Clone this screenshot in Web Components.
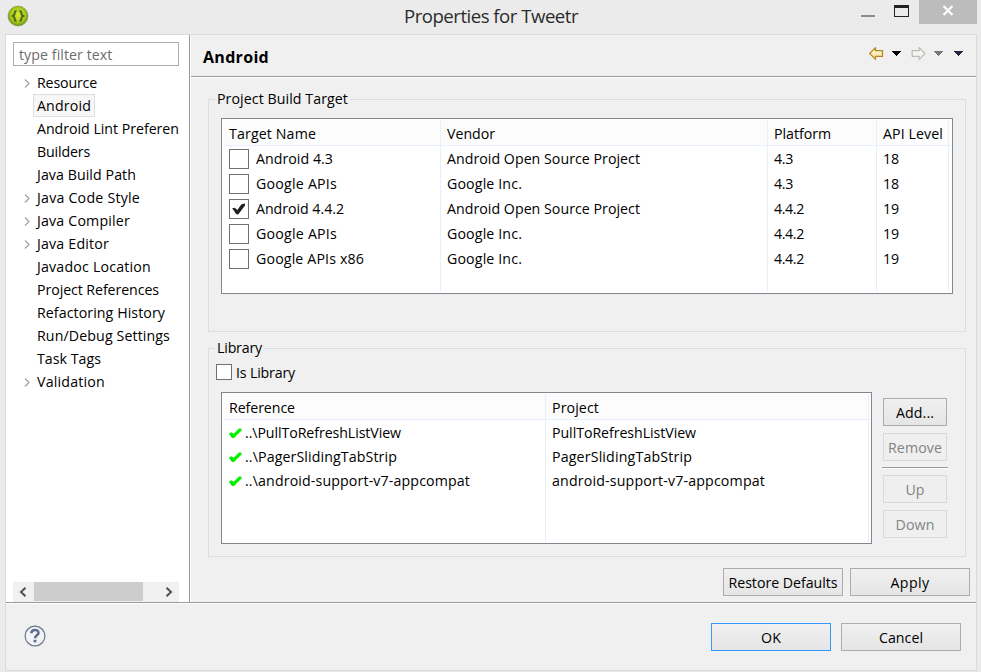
<!DOCTYPE html>
<html lang="en">
<head>
<meta charset="utf-8">
<title>Properties for Tweetr</title>
<style>
html,body{margin:0;height:100%;overflow:hidden;background:#ebebeb}
body{font:14.2px/22px "Open Sans","Noto Sans",sans-serif;color:#000}
</style>
</head>
<body>
<properties-dialog></properties-dialog>
<script>
function define(name, css, html, setup) {
  const template = document.createElement('template');
  template.innerHTML = '<style>*{box-sizing:border-box}svg{display:block;flex:none}' + css + '</style>' + html;
  customElements.define(name, class extends HTMLElement {
    connectedCallback() {
      if (this.shadowRoot) return;
      this.attachShadow({ mode: 'open' }).append(template.content.cloneNode(true));
      if (setup) setup(this, this.shadowRoot);
    }
  });
}

/* Label whose tracking is adjusted so that it fills the width in "w". */
define('ui-label', ':host{display:inline-block;white-space:pre}span{display:inline-block}', '<span></span>', (host, root) => {
  const span = root.querySelector('span');
  const text = host.getAttribute('text');
  span.textContent = text;
  const target = parseFloat(host.getAttribute('w'));
  if (target) {
    const spacing = (target - span.getBoundingClientRect().width) / text.length;
    span.style.letterSpacing = spacing.toFixed(3) + 'px';
  }
});

define('ui-button', `
:host{display:flex;width:120px;height:28px;flex:none}
button{all:unset;box-sizing:border-box;flex:1;display:flex;align-items:center;justify-content:center;border:1px solid #acacac;background:linear-gradient(#f0f0f0,#e5e5e5);padding-top:1px}
:host([primary]) button{border-color:#3399ff}
:host([disabled]) button{border-color:#d9d9d9;background:#efefef;color:#838383}
`, '<button><slot></slot></button>');

define('ui-checkbox', `
:host{display:block;flex:none;width:20px;height:20px}
:host([small]){width:16px;height:16px}
div{width:100%;height:100%;border:1px solid #707070;background:#fff}
svg{display:none}
:host([checked]) svg{display:block}
`, '<div><svg width="18" height="18" viewBox="0 0 18 18"><path d="M2 8.4l2.800-.7 2.500 2.200L11.500 4.200l3.500-.8v2.200L9 13.600l-1 .8-2-.4-2.300-3.700z" fill="#212121"/></svg></div>');

define('green-check', ':host{display:block;flex:none;width:13px;height:11px}',
  '<svg width="13" height="11" viewBox="0 0 13 11"><path d="M0 6l1.500-1.500h1.700l1.500 1.300L10 .6h1.700L13 2 5 10H3z" fill="#00f000"/></svg>');

define('tree-item', `
:host{display:flex;height:23px;align-items:center;padding-left:10px}
i{display:block;width:10px;flex:none}
span{height:23px;padding:0 3px 0 3px;border:1px solid transparent;line-height:22px;white-space:nowrap}
:host([selected]) span{background:#f7f7f7;border-color:#dedede}
svg{visibility:hidden;margin-top:2px}
:host([expandable]) svg{visibility:visible}
`, '<i><svg width="8" height="9" viewBox="0 0 8 9"><path d="M2 .5l4 4-4 4" fill="none" stroke="#a2a2a2" stroke-width="1.2"/></svg></i><span><slot></slot></span>');

define('group-box', `
:host{display:block}
fieldset{margin:0;height:100%;min-width:0;border:1px solid #dcdcdc;padding:0}
legend{margin-left:6px;padding:0 2px;height:22px;line-height:22px}
`, '<fieldset><legend><slot name="title"></slot></legend><slot></slot></fieldset>');

/* Table: "cols" holds the column widths, "rows" the lines of cells as text~width. */
define('data-table', `
:host{display:block;border:1px solid #828790;background:#fff;box-sizing:border-box;padding:1px}
.grid{display:grid;height:100%;grid-template-columns:var(--cols)}
.col{border-right:1px solid #e6effa;display:flex;flex-direction:column;min-width:0}
.col.rest{border:0}
.cell{height:var(--row);display:flex;align-items:center;padding-left:6px;flex:none}
.col.rest .cell{padding:0}
.head{height:26px;background:#fcfcfc;border-bottom:1px solid #e6effa;padding-top:2px;margin-bottom:var(--head-gap,0)}
.cell ui-checkbox{margin-right:7px}
.cell green-check{margin-right:3px}
`, '<div class="grid"></div>', (host, root) => {
  const grid = root.querySelector('.grid');
  const widths = host.getAttribute('cols').split(' ');
  const rows = host.getAttribute('rows').split('|').map(row => row.split(';'));
  const kind = host.getAttribute('marker');
  grid.style.setProperty('--cols', widths.map(v => v + 'px').join(' ') + ' 1fr');
  grid.style.setProperty('--row', host.getAttribute('row-height') + 'px');
  const checked = Number(host.getAttribute('checked'));
  for (let c = 0; c <= widths.length; c++) {
    const col = document.createElement('div');
    col.className = c === widths.length ? 'col rest' : 'col';
    rows.forEach((row, r) => {
      if (c === widths.length && r) return;
      const cell = document.createElement('div');
      cell.className = r ? 'cell' : 'cell head';
      if (c === 0 && r) {
        const mark = document.createElement(kind);
        if (r === checked) mark.setAttribute('checked', '');
        cell.append(mark);
      }
      if (row[c]) {
        const [text, w] = row[c].split('~');
        const label = document.createElement('ui-label');
        label.setAttribute('text', text);
        label.setAttribute('w', w);
        cell.append(label);
      }
      col.append(cell);
    });
    grid.append(col);
  }
});

define('title-bar', `
:host{display:flex;height:34px;align-items:flex-start}
.logo{margin:5px 0 0 7px;width:397px}
.title{font-size:18.6px;line-height:32px;color:#2b2b2b}
.controls{display:flex;margin:0 4px 0 auto}
.close{width:58px;height:24px;background:#bcbcbc;margin-left:10px;display:flex;justify-content:center;padding-top:5px}
`, `
<div class="logo"><svg width="22" height="22" viewBox="0 0 22 22"><defs><radialGradient id="g" cx=".5" cy=".45" r=".55"><stop offset="0" stop-color="#d6ec2c"/><stop offset=".65" stop-color="#a9cd1b"/><stop offset="1" stop-color="#668b1f"/></radialGradient></defs><circle cx="11" cy="11" r="10" fill="url(#g)" stroke="#7c9c3b" stroke-width=".6"/><path d="M9.500 6C7.200 6 8 8 7.300 9.700L5.700 11l1.600 1.300c.7 1.700-.1 3.700 2.200 3.700M12.500 6c2.300 0 1.500 2 2.200 3.700L16.300 11l-1.600 1.300c-.7 1.700.1 3.700-2.200 3.700" fill="none" stroke="#53611d" stroke-width="2"/></svg></div>
<div class="title"><ui-label text="Properties for Tweetr" w="174"></ui-label></div>
<div class="controls">
<svg width="48" height="24" viewBox="0 0 48 24"><path d="M0 15h14v2H0z" fill="#8c8c8c"/><path d="M33 5h15v12H33zm1 3v8h13V8z" fill="#222" fill-rule="evenodd"/></svg>
<div class="close"><svg width="12" height="11" viewBox="0 0 12 11"><path d="M1.500 1l9 9M10.500 1l-9 9" stroke="#fff" stroke-width="2.200"/></svg></div>
</div>`);

define('nav-tools', ':host{display:block}', `
<svg width="95" height="13" viewBox="0 0 95 13"><defs><linearGradient id="y" x1="0" x2="0" y1="0" y2="1"><stop offset="0" stop-color="#fffef0"/><stop offset="1" stop-color="#f8df83"/></linearGradient></defs>
<path d="M1.700 6.500L7.500.7v3h7v5.600h-7v3z" fill="url(#y)" stroke="#b9851f" stroke-width="1.200"/>
<path d="M57 6.500L51.200.7v3h-7v5.600h7v3z" fill="#f5f5f2" stroke="#bdbdb8" stroke-width="1.200"/>
<g shape-rendering="crispEdges"><path d="M23 4h10l-5 5z" fill="#000"/><path d="M65 4h10l-5 5z" fill="#77777b"/><path d="M85 4h10l-5 5z" fill="#25213f"/></g></svg>`);

define('h-scrollbar', `
:host{display:flex;width:166px;height:20px;background:#f0f0f0;align-items:center}
.thumb{width:109px;height:19px;background:#cdcdcd;align-self:flex-start}
.arrow{width:21px;padding:0 0 1px 6px}.arrow.right{width:36px;padding-left:22px}
`, `
<div class="arrow"><svg width="8" height="10" viewBox="0 0 8 10"><path d="M6.500 .8L2 5l4.500 4.200" fill="none" stroke="#555" stroke-width="2.100"/></svg></div>
<div class="thumb"></div>
<div class="arrow right"><svg width="8" height="10" viewBox="0 0 8 10"><path d="M1.500 .8L6 5 1.500 9.200" fill="none" stroke="#555" stroke-width="2.100"/></svg></div>`);

define('side-panel', `
:host{display:flex;flex-direction:column;width:185px;background:#fff;border-right:1px solid #fff;box-shadow:inset -1px 0 #999;padding:7px 0 0 7px;flex:none}
.filter{width:166px;height:24px;border:1px solid #abadb3;padding-left:5px;color:#6d6d6d;line-height:24px;flex:none}
nav{width:166px;margin-top:5px;overflow:hidden;flex:1}
`, `
<div class="filter"><ui-label text="type filter text" w="93.500"></ui-label></div>
<nav>
<tree-item expandable><ui-label text="Resource" w="60"></ui-label></tree-item>
<tree-item selected><ui-label text="Android" w="54"></ui-label></tree-item>
<tree-item><ui-label text="Android Lint Preferen" w="142"></ui-label></tree-item>
<tree-item><ui-label text="Builders" w="53"></ui-label></tree-item>
<tree-item><ui-label text="Java Build Path" w="99"></ui-label></tree-item>
<tree-item expandable><ui-label text="Java Code Style" w="103"></ui-label></tree-item>
<tree-item expandable><ui-label text="Java Compiler" w="93"></ui-label></tree-item>
<tree-item expandable><ui-label text="Java Editor" w="72"></ui-label></tree-item>
<tree-item><ui-label text="Javadoc Location" w="114"></ui-label></tree-item>
<tree-item><ui-label text="Project References" w="122"></ui-label></tree-item>
<tree-item><ui-label text="Refactoring History" w="128"></ui-label></tree-item>
<tree-item><ui-label text="Run/Debug Settings" w="133"></ui-label></tree-item>
<tree-item><ui-label text="Task Tags" w="64"></ui-label></tree-item>
<tree-item expandable><ui-label text="Validation" w="68"></ui-label></tree-item>
</nav>
<h-scrollbar></h-scrollbar>`);

define('page-header', `
:host{display:flex;height:43px;border-bottom:1px solid #fff;box-shadow:inset 0 -1px #999;justify-content:space-between;padding:0 13px 0 12px}
b{font-size:16px;line-height:45px;font-weight:700}
nav-tools{margin-top:12px}
`, '<b><ui-label text="Android" w="66"></ui-label></b><nav-tools></nav-tools>');

define('settings-page', `
:host{display:flex;flex-direction:column;flex:1;min-width:0}
main{padding:10px 10px 0 17px}
.target{height:244px}.target data-table{width:732px;height:176px;margin:8px 0 0 12px}
.library{height:220px;margin-top:5px}
.flag{display:flex;gap:4px;align-items:center;margin:3px 0 0 7px;height:22px}
.flag ui-checkbox{margin-top:-2px}
.body{display:flex;margin:8px 0 0 12px}
.body data-table{width:651px;height:152px;--head-gap:1px}
.side{width:66px;margin:6px 0 0 10px;display:flex;flex-direction:column;align-items:center}
.side ui-button{width:64px}
.side ui-button+ui-button{margin-top:7px}
hr{width:66px;height:2px;margin:6px 0;border:0;border-top:1px solid #999;background:#fff}
.actions{display:flex;justify-content:flex-end;gap:7px;margin:11px -4px 0 0}
`, `
<page-header></page-header>
<main>
<group-box class="target"><ui-label slot="title" text="Project Build Target" w="131"></ui-label>
<data-table cols="218 327 109 72" row-height="25" marker="ui-checkbox" checked="3" rows="Target Name~87;Vendor~48;Platform~57;API Level~60|Android 4.3~77;Android Open Source Project~193;4.3~19;18~16|Google APIs~81;Google Inc.~75;4.3~19;18~16|Android 4.4.2~88;Android Open Source Project~193;4.4.2~30;19~16|Google APIs~81;Google Inc.~75;4.4.2~30;19~16|Google APIs x86~108;Google Inc.~75;4.4.2~30;19~16"></data-table>
</group-box>
<group-box class="library"><ui-label slot="title" text="Library" w="45"></ui-label>
<div class="flag"><ui-checkbox small></ui-checkbox><ui-label text="Is Library" w="59"></ui-label></div>
<div class="body">
<data-table cols="323 323" row-height="24" marker="green-check" rows="Reference~66;Project~47|..\\PullToRefreshListView~156;PullToRefreshListView~144|..\\PagerSlidingTabStrip~152;PagerSlidingTabStrip~140|..\\android-support-v7-appcompat~225;android-support-v7-appcompat~213"></data-table>
<div class="side"><ui-button><ui-label text="Add..." w="38"></ui-label></ui-button><ui-button disabled><ui-label text="Remove" w="54"></ui-label></ui-button><hr><ui-button disabled><ui-label text="Up" w="19"></ui-label></ui-button><ui-button disabled><ui-label text="Down" w="39"></ui-label></ui-button></div>
</div></group-box>
<div class="actions"><ui-button><ui-label text="Restore Defaults" w="109"></ui-label></ui-button><ui-button><ui-label text="Apply" w="39"></ui-label></ui-button></div>
</main>`);

define('dialog-footer', `
:host{display:flex;height:68px;border-top:1px solid #999;box-shadow:inset 0 1px #fff;padding:20px 15px 0 18px;align-items:flex-start}
.help{margin:2px auto 0 0}
ui-button+ui-button{margin-left:10px}
`, `
<svg class="help" width="22" height="22" viewBox="0 0 22 22"><circle cx="11" cy="11" r="9.900" fill="#f3f3f3" stroke="#65748f" stroke-width="1.200"/><path d="M7.300 8.300C7.500 3.800 14.700 3.800 14.500 8c-.1 2.300-3.500 2.500-3.500 5.300" fill="none" stroke="#5b6c90" stroke-width="2.500"/><path d="M9.600 14.800h2.800v2.500H9.600z" fill="#5b6c90"/></svg>
<ui-button primary><ui-label text="OK" w="20"></ui-label></ui-button><ui-button><ui-label text="Cancel" w="44"></ui-label></ui-button>`);

define('properties-dialog', `
:host{display:block;width:981px;height:672px;background:#ebebeb}
.frame{margin:0 4px 0 5px;height:637px;border:1px solid #dadada;background:#f0f0f0;display:flex;flex-direction:column}
.content{display:flex;height:567px}
`, '<title-bar></title-bar><div class="frame"><div class="content"><side-panel></side-panel><settings-page></settings-page></div><dialog-footer></dialog-footer></div>');
</script>
</body>
</html>
